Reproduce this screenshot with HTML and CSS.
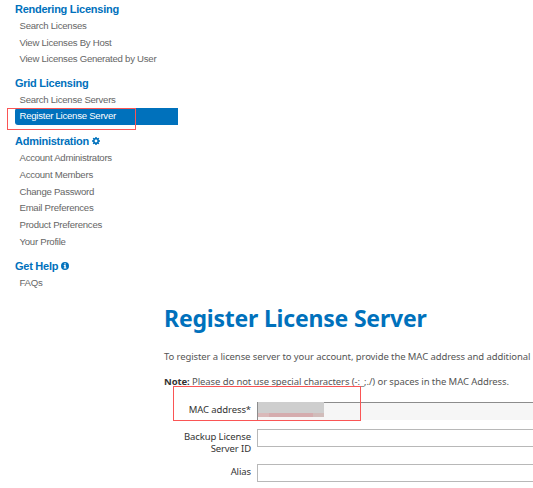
FILE: index.html
```
<!DOCTYPE html>
<html lang="en">
<head>
<meta charset="utf-8">
<title>Register License Server</title>
<link rel="stylesheet" href="styles.css">
</head>
<body>
<nav class="sidebar">
  <section>
    <h2>Rendering Licensing</h2>
    <ul><li>Search Licenses</li><li>View Licenses By Host</li><li>View Licenses Generated by User</li></ul>
  </section>
  <section>
    <h2>Grid Licensing</h2>
    <ul><li>Search License Servers</li><li class="active">Register License Server<span class="mark mark-nav"></span></li></ul>
  </section>
  <section>
    <h2>Administration <svg class="icon" viewBox="0 0 16 16"><path fill-rule="evenodd" d="M6.700 0h2.600l.4 2.200 1.300.5L12.800 1.400 14.600 3.200 13.300 5l.5 1.300L16 6.700v2.600l-2.200.4-.5 1.300 1.300 1.800-1.800 1.800-1.800-1.300-1.300.5L9.300 16H6.700l-.4-2.200-1.300-.5-1.800 1.300-1.800-1.800L2.700 11l-.5-1.300L0 9.300V6.700l2.200-.4L2.700 5 1.400 3.200 3.200 1.400 5 2.700l1.300-.5zM8 5.200a2.800 2.800 0 1 0 0 5.600 2.800 2.800 0 0 0 0-5.600z"/></svg></h2>
    <ul><li>Account Administrators</li><li>Account Members</li><li>Change Password</li><li>Email Preferences</li><li>Product Preferences</li><li>Your Profile</li></ul>
  </section>
  <section>
    <h2>Get Help <svg class="icon" viewBox="0 0 16 16"><path fill-rule="evenodd" d="M8 0a8 8 0 1 0 0 16A8 8 0 0 0 8 0zM6.700 2.500h2.800v2.400H6.700zM5.500 6.200h4v5h1.200v2H5.500v-2h1.200v-3H5.500z"/></svg></h2>
    <ul><li>FAQs</li></ul>
  </section>
</nav>
<main>
  <h1>Register License Server</h1>
  <p class="intro">To register a license server to your account, provide the MAC address and additional</p>
  <p class="note"><b>Note:</b> Please do not use special characters (-:_;./) or spaces in the MAC Address.</p>
  <form>
    <div class="row mac"><label>MAC address*</label><div class="field"><span class="redacted"><i></i><i></i><i></i><i></i><i></i><i></i></span></div><span class="mark mark-mac"></span></div>
    <div class="row"><label>Backup License<br>Server ID</label><div class="field"></div></div>
    <div class="row"><label>Alias</label><div class="field"></div></div>
  </form>
</main>
</body>
</html>
```
FILE: styles.css
```
* { box-sizing: border-box; }
body { margin: 0; width: 533px; height: 488px; overflow: hidden; background: #fff; font-family: "Noto Sans", sans-serif; }
.sidebar { width: 178px; height: 299px; padding: 1px 0 0 15px; font-family: "Liberation Sans", Arial, sans-serif; }
section { margin-bottom: 7.3px; }
h2 { margin: 0; font-size: 11px; line-height: 16.8px; letter-spacing: -0.26px; color: #0071bc; white-space: nowrap; }
.icon { width: 8px; height: 8px; margin-left: 0.5px; fill: #0071bc; }
ul { list-style: none; margin: 0; padding: 0; }
li { position: relative; height: 16.8px; padding-left: 4.5px; font-size: 9.6px; line-height: 15px; letter-spacing: -0.26px; color: #666; white-space: nowrap; }
.active { top: -1px; background: #0071bc; color: #fff; border-radius: 3px 0 0 3px; }
.mark { position: absolute; border: 1px solid #fa5555; }
.mark-nav { left: -8px; top: 0; width: 129px; height: 22px; }
main { margin-left: 164px; color: #555; }
h1 { margin: 0; padding-top: 3px; font-size: 23px; line-height: 32px; letter-spacing: -0.2px; color: #0071bc; white-space: nowrap; }
p { margin: 0; font-size: 9.5px; line-height: 14px; letter-spacing: -0.095px; white-space: nowrap; }
.intro { padding-top: 16px; }
.note { padding-top: 11px; }
b { color: #333; }
form { padding-top: 13px; color: #333; }
.row { display: flex; position: relative; height: 35px; font-size: 9.5px; line-height: 12px; letter-spacing: -0.1px; }
.row.mac { height: 27px; }
label { flex: none; width: 87px; padding-top: 2px; text-align: right; white-space: nowrap; }
.field { flex: none; width: 290px; height: 18px; margin-left: 6px; border: 1px solid #b8b8b8; }
.mac .field { border: solid #8c8c8c; border-width: 1px 0 0 1px; background: #f6f6f6; }
.redacted { display: grid; width: 66px; height: 15px; margin-top: -1px; grid-template-columns: repeat(6, 11px); background: linear-gradient(#cecece 11px, transparent 11px); }
.redacted i { margin-top: 11px; background: #d5acae; }
.redacted i:nth-child(1) { background: #dab9b9; }
.redacted i:nth-child(6) { background: #d1bcba; }
.mark-mac { left: 9px; top: -16px; width: 188px; height: 35px; }
```
